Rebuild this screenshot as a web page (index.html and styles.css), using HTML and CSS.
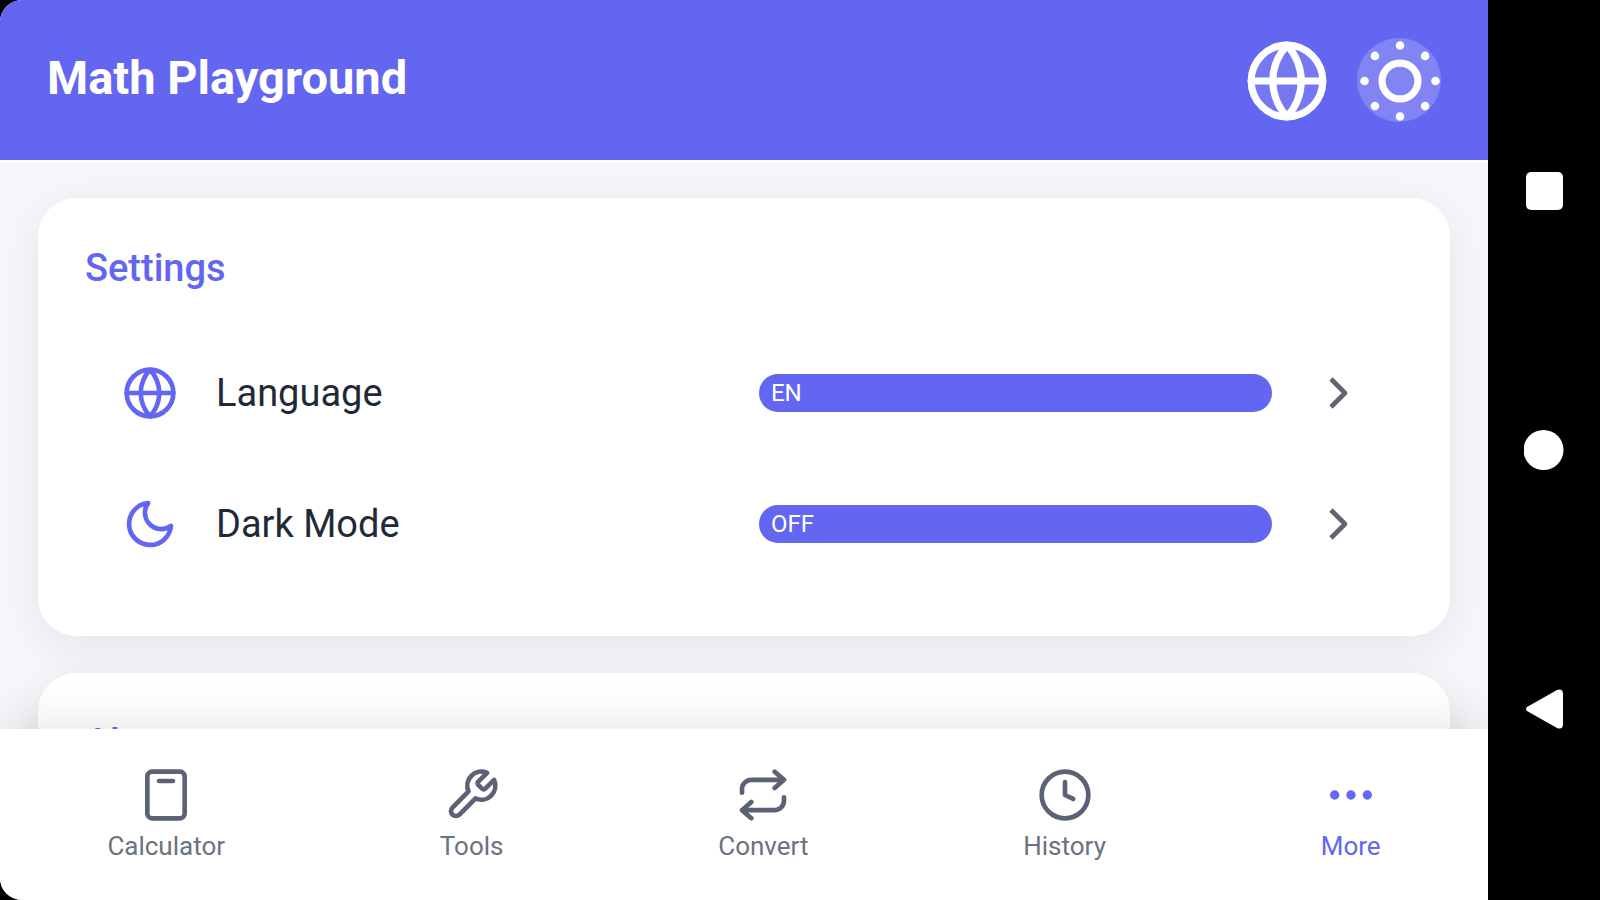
FILE: index.html
```html
<!DOCTYPE html>
<html lang="en">
<head>
<meta charset="utf-8">
<title>Math Playground</title>
<link rel="stylesheet" href="styles.css">
</head>
<body>
<div class="device">
  <div class="app">
    <header class="topbar">
      <h1 class="topbar-title">Math Playground</h1>
      <div class="topbar-actions">
        <button class="round-button" type="button" aria-label="Change language">
          <svg class="icon-large" viewBox="0 0 24 24"><circle class="globe-face" cx="12" cy="12" r="10"/><path d="M2 12h20M12 2a15.3 15.3 0 0 1 4 10 15.3 15.3 0 0 1-4 10 15.3 15.3 0 0 1-4-10 15.3 15.3 0 0 1 4-10z"/></svg>
        </button>
        <button class="round-button round-button-filled" type="button" aria-label="Toggle theme">
          <svg class="icon-large" viewBox="0 0 24 24"><circle cx="12" cy="12" r="5"/><path class="rays" d="M12 2.1h.01M12 21.9h.01M5 5h.01M19 19h.01M2.1 12h.01M21.9 12h.01M5 19h.01M19 5h.01"/></svg>
        </button>
      </div>
    </header>
    <main class="content">
      <section class="card">
        <h2 class="card-title">Settings</h2>
        <button class="row" type="button">
          <svg class="icon" viewBox="0 0 24 24"><circle cx="12" cy="12" r="10"/><path d="M2 12h20M12 2a15.3 15.3 0 0 1 4 10 15.3 15.3 0 0 1-4 10 15.3 15.3 0 0 1-4-10 15.3 15.3 0 0 1 4-10z"/></svg>
          <span class="row-label">Language</span>
          <span class="badge">EN</span>
          <svg class="icon chevron" viewBox="0 0 24 24"><path d="M9 18l6-6-6-6"/></svg>
        </button>
        <button class="row" type="button">
          <svg class="icon" viewBox="0 0 24 24"><path d="M21 12.79A9 9 0 1 1 11.21 3 7 7 0 0 0 21 12.79z"/></svg>
          <span class="row-label">Dark Mode</span>
          <span class="badge">OFF</span>
          <svg class="icon chevron" viewBox="0 0 24 24"><path d="M9 18l6-6-6-6"/></svg>
        </button>
      </section>
      <section class="card">
        <h2 class="card-title">About</h2>
      </section>
    </main>
    <nav class="tabs">
      <button class="tab" type="button">
        <svg class="icon" viewBox="0 0 24 24"><rect x="4" y="2" width="16" height="20" rx="2"/><path d="M9 6h6"/></svg>
        <span>Calculator</span>
      </button>
      <button class="tab" type="button">
        <svg class="icon" viewBox="0 0 24 24"><path d="M14.7 6.3a1 1 0 0 0 0 1.4l1.6 1.6a1 1 0 0 0 1.4 0l3.77-3.77a6 6 0 0 1-7.94 7.94l-6.91 6.91a2.12 2.12 0 0 1-3-3l6.91-6.91a6 6 0 0 1 7.94-7.94l-3.76 3.76z"/></svg>
        <span>Tools</span>
      </button>
      <button class="tab" type="button">
        <svg class="icon" viewBox="0 0 24 24"><path d="M17 2l4 3.5-4 3.5M3 11V9.5a4 4 0 0 1 4-4h14M7 22l-4-3.500 4-3.500M21 13v1.500a4 4 0 0 1-4 4H3"/></svg>
        <span>Convert</span>
      </button>
      <button class="tab" type="button">
        <svg class="icon" viewBox="0 0 24 24"><circle cx="12" cy="12" r="10"/><path d="M12 6.500V12l3.500 1.700"/></svg>
        <span>History</span>
      </button>
      <button class="tab tab-active" type="button" aria-current="page">
        <svg class="icon" viewBox="0 0 24 24"><circle cx="5" cy="12" r="1"/><circle cx="12" cy="12" r="1"/><circle cx="19" cy="12" r="1"/></svg>
        <span>More</span>
      </button>
    </nav>
  </div>
  <aside class="system-bar">
    <button class="system-button" type="button" aria-label="Recent apps"><svg class="system-icon" viewBox="0 0 40 40"><rect x="2" y="1" width="37" height="38" rx="5"/></svg></button>
    <button class="system-button" type="button" aria-label="Home"><svg class="system-icon" viewBox="0 0 40 40"><circle cx="19.500" cy="20" r="20"/></svg></button>
    <button class="system-button" type="button" aria-label="Back"><svg class="system-icon" viewBox="0 0 40 40"><path d="M3 18 33 1Q39-1 39 5V35Q39 41 33 39L3 22Q1 20 3 18z"/></svg></button>
  </aside>
</div>
</body>
</html>
```

FILE: styles.css
```css
* { box-sizing: border-box; }

body {
  margin: 0;
  background: #000;
  font-family: Roboto, "Liberation Sans", sans-serif;
}

button {
  margin: 0;
  padding: 0;
  border: 0;
  background: none;
  color: inherit;
  font: inherit;
  text-align: left;
  cursor: pointer;
}

svg {
  display: block;
  flex: none;
  fill: none;
  stroke: currentColor;
  stroke-width: 2;
  stroke-linecap: round;
  stroke-linejoin: round;
}

.device {
  display: flex;
  height: 100vh;
  overflow: hidden;
}

.app {
  flex: 1;
  display: flex;
  flex-direction: column;
  min-width: 0;
  background: #f5f7fb;
  border-radius: 22px 0 0 22px;
  overflow: hidden;
}

.topbar {
  display: flex;
  align-items: center;
  justify-content: space-between;
  padding: 38px 47px;
  background: #6366f1;
  color: #fff;
}

.topbar-title {
  margin: 0;
  padding-bottom: 4px;
  font-size: 47px;
  line-height: 56px;
  font-weight: 700;
}

.topbar-actions {
  display: flex;
  gap: 29px;
}

.round-button {
  display: grid;
  place-items: center;
  width: 84px;
  height: 84px;
  border-radius: 50%;
}

.round-button-filled { background: rgba(255, 255, 255, 0.2); }

.globe-face { fill: rgba(255, 255, 255, 0.12); }

.rays { stroke-width: 2.4; }

.icon-large {
  width: 86px;
  height: 86px;
}

.icon {
  width: 56px;
  height: 56px;
}

.content {
  flex: 1;
  min-height: 0;
  overflow: hidden;
  padding: 35px 38px 0;
  border-top: 3px solid #fdfeff;
}

.card {
  margin-bottom: 37px;
  padding: 47px;
  border-radius: 38px;
  background: #fff;
  box-shadow: 0 9px 47px rgba(0, 0, 0, 0.08);
}

.card-title {
  margin: 0 0 36px;
  font-size: 38px;
  line-height: 46px;
  font-weight: 500;
  color: #6366f1;
}

.row {
  display: grid;
  grid-template-columns: 56px 62fr 63fr 56px;
  align-items: center;
  gap: 38px;
  width: 100%;
  padding: 37px;
  color: #6366f1;
}

.row-label {
  padding-top: 2px;
  font-size: 38px;
  line-height: 55px;
  color: #1f2937;
}

.badge {
  padding: 4px 12px;
  border-radius: 19px;
  background: #6366f1;
  color: #fff;
  font-size: 24px;
  line-height: 30px;
}

.chevron {
  color: #5f6470;
  stroke-linecap: butt;
}

.tabs {
  position: relative;
  display: flex;
  justify-content: space-around;
  padding: 38px 0;
  background: #fff;
  box-shadow: 0 -5px 47px rgba(0, 0, 0, 0.1);
}

.tab {
  display: flex;
  flex-direction: column;
  align-items: center;
  gap: 8px;
  color: #6b7280;
  font-size: 26px;
  line-height: 31px;
}

.tab .icon { color: #5b6275; }

.tab-active,
.tab-active .icon { color: #6366f1; }

.system-bar {
  display: flex;
  flex-direction: column;
  align-items: center;
  justify-content: center;
  gap: 219px;
  width: 112px;
  background: #000;
}

.system-button {
  display: grid;
  place-items: center;
  width: 40px;
  height: 40px;
}

.system-icon {
  width: 40px;
  height: 40px;
  fill: #fff;
  stroke: none;
}
```
